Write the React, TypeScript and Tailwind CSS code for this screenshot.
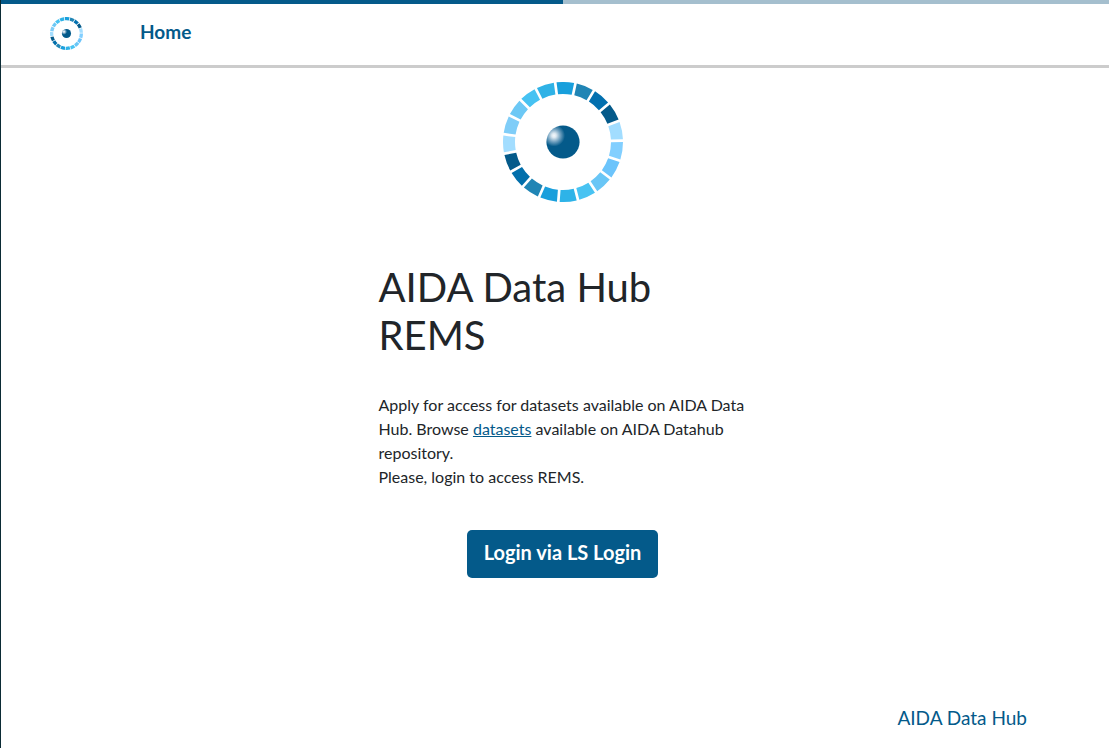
import { useId } from "react";

const SEGMENTS = [
  { angle: 2.5, color: "#189fdc" },
  { angle: 21.5, color: "#2085b5" },
  { angle: 40.5, color: "#0270af" },
  { angle: 59.5, color: "#045a8a" },
  { angle: 79, color: "#a2ddff" },
  { angle: 98.5, color: "#82cfff" },
  { angle: 118, color: "#6cc4fb" },
  { angle: 137, color: "#69c6f6" },
  { angle: 156, color: "#48c3f2" },
  { angle: 175, color: "#2eb3e8" },
  { angle: 194, color: "#1a9fdc" },
  { angle: 213, color: "#2085b5" },
  { angle: 231, color: "#026fab" },
  { angle: 249.5, color: "#045a8a" },
  { angle: 268, color: "#a2ddff" },
  { angle: 287, color: "#7fcdf8" },
  { angle: 306, color: "#6cc8f5" },
  { angle: 323.5, color: "#46c2f2" },
  { angle: 342.5, color: "#2fb2e6" },
];

function point(radius: number, degrees: number) {
  const a = (degrees * Math.PI) / 180;
  return `${(60 + radius * Math.sin(a)).toFixed(2)} ${(60 - radius * Math.cos(a)).toFixed(2)}`;
}

function segmentPath(index: number) {
  const count = SEGMENTS.length;
  const mid = SEGMENTS[index].angle;
  const previous = index === 0 ? SEGMENTS[count - 1].angle - 360 : SEGMENTS[index - 1].angle;
  const next = index === count - 1 ? SEGMENTS[0].angle + 360 : SEGMENTS[index + 1].angle;
  const start = (previous + mid) / 2;
  const end = (mid + next) / 2;
  return [
    `M${point(60, start + 1.3)}`,
    `A60 60 0 0 1 ${point(60, end - 1.3)}`,
    `L${point(48, end - 1.6)}`,
    `A48 48 0 0 0 ${point(48, start + 1.6)}Z`,
  ].join("");
}

function Logo({ className }: { className: string }) {
  const id = useId();
  return (
    <svg viewBox="0 0 120 120" className={className} role="img" aria-label="AIDA">
      <defs>
        <radialGradient id={id} gradientUnits="userSpaceOnUse" cx="51" cy="53.5" r="11">
          <stop offset="0" stopColor="#f4f9fc" />
          <stop offset="0.2" stopColor="#dce8f0" />
          <stop offset="0.6" stopColor="#6b9dbd" />
          <stop offset="1" stopColor="#045a8a" />
        </radialGradient>
      </defs>
      {SEGMENTS.map((segment, i) => (
        <path key={segment.angle} d={segmentPath(i)} fill={segment.color} />
      ))}
      <circle cx="60" cy="60" r="16.6" fill={`url(#${id})`} />
    </svg>
  );
}

export default function App() {
  return (
    <div className="flex min-h-screen overflow-x-hidden bg-white font-['Lato',sans-serif] text-base text-[#212529]">
      <div className="w-px shrink-0 bg-[#0b2b35]" />
      <div className="flex min-w-0 grow flex-col">
        <div className="flex h-1">
          <div className="w-[562px] bg-[#045a8a]" />
          <div className="grow bg-[#a5bfce]" />
        </div>
        <header className="flex h-16 items-center border-b-3 border-[#cccccc] pb-[2px] pl-12">
          <a href="#" className="mr-[57px] block pl-px">
            <Logo className="size-[33px]" />
          </a>
          <nav>
            <a href="#" className="block pb-1 text-[19px] leading-7 font-bold text-[#045a8a]">
              Home
            </a>
          </nav>
        </header>
        <main className="flex grow flex-col items-center pt-[14px] pl-[15px]">
          <Logo className="size-[120px]" />
          <div className="mt-[61px] w-[368px]">
            <h1 className="text-[40px] leading-[48px]">AIDA Data Hub REMS</h1>
            <p className="mt-[34px] leading-6">
              Apply for access for datasets available on AIDA Data Hub. Browse{" "}
              <a href="#" className="text-[#045a8a] underline">
                datasets
              </a>{" "}
              available on AIDA Datahub repository.
              <br />
              Please, login to access REMS.
            </p>
          </div>
          <button
            type="button"
            className="mt-[41px] h-12 rounded-[5px] bg-[#045a8a] px-[17px] pb-1 text-xl font-bold text-white"
          >
            Login via LS Login
          </button>
        </main>
        <footer className="flex justify-end pr-[82px] pb-4">
          <a href="#" className="text-[19px] leading-7 text-[#045a8a]">
            AIDA Data Hub
          </a>
        </footer>
      </div>
    </div>
  );
}
